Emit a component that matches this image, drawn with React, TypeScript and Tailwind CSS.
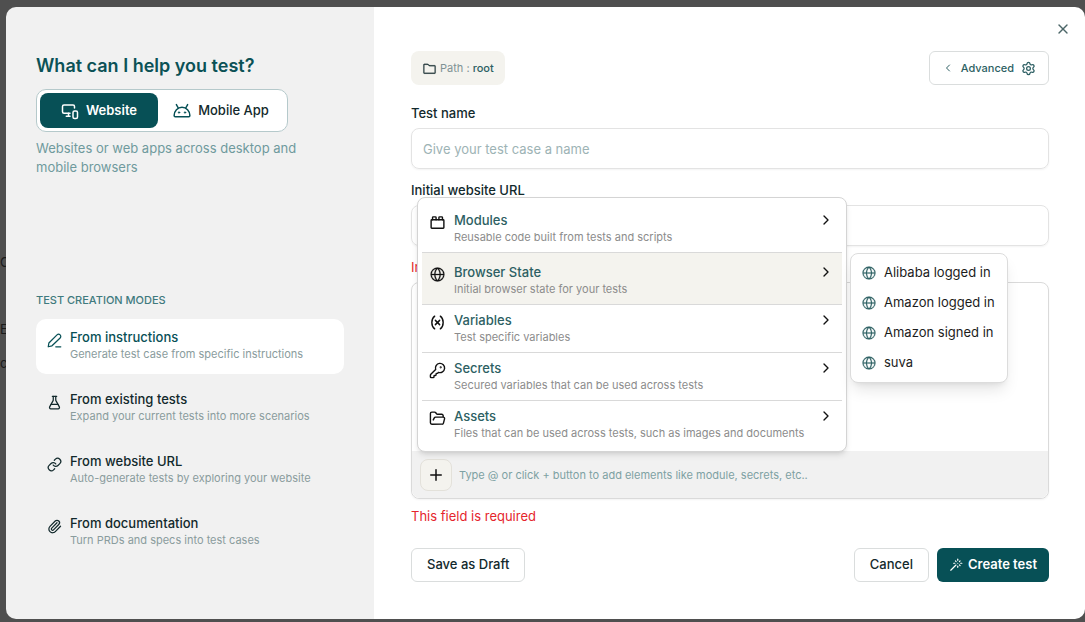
import React, { useState } from 'react';
import {
  ChevronLeft,
  ChevronRight,
  FlaskConical,
  FolderOpen,
  KeyRound,
  Link,
  MonitorSmartphone,
  Paperclip,
  Plus,
  Settings,
  ToyBrick,
  Variable,
  Wand,
  X,
} from 'lucide-react';
import { PiFolderSimple, PiGlobeSimple } from 'react-icons/pi';

const PencilUnderline = () => (
  <svg width="15" height="15" viewBox="0 0 24 24" fill="none" stroke="currentColor" strokeWidth="2" strokeLinecap="round" strokeLinejoin="round">
    <path d="M2 22l1-6L16 3a3.400 3.400 0 0 1 5 5L8 20.500z" />
    <path d="M14 22h8" />
  </svg>
);

const AndroidHead = () => (
  <svg width="18" height="18" viewBox="0 0 24 24" fill="none" stroke="currentColor" strokeWidth="2" strokeLinecap="round" strokeLinejoin="round">
    <path d="M1.500 18a10.500 11 0 0 1 21 0 1.500 1.500 0 0 1-1.500 1.500H3a1.500 1.500 0 0 1-1.500-1.500z" />
    <path d="M4.500 3.500 7 8M19.500 3.500 17 8" />
    <circle cx="8" cy="14" r="1" fill="currentColor" strokeWidth="1" />
    <circle cx="16" cy="14" r="1" fill="currentColor" strokeWidth="1" />
  </svg>
);

const modes = [
  {
    id: 'instructions',
    title: 'From instructions',
    description: 'Generate test case from specific instructions',
    icon: <PencilUnderline />,
  },
  {
    id: 'existing',
    title: 'From existing tests',
    description: 'Expand your current tests into more scenarios',
    icon: <FlaskConical size={15} />,
  },
  {
    id: 'url',
    title: 'From website URL',
    description: 'Auto-generate tests by exploring your website',
    icon: <Link size={15} />,
  },
  {
    id: 'documentation',
    title: 'From documentation',
    description: 'Turn PRDs and specs into test cases',
    icon: <Paperclip size={15} />,
  },
];

const menuItems = [
  {
    id: 'modules',
    title: 'Modules',
    description: 'Reusable code built from tests and scripts',
    icon: <ToyBrick size={17} />,
    className: 'border-b pt-[10px]',
  },
  {
    id: 'browser-state',
    title: 'Browser State',
    description: 'Initial browser state for your tests',
    icon: <PiGlobeSimple size={17} strokeWidth={4} />,
    className: 'border-b bg-[#f4f3ee] pt-[10px]',
  },
  {
    id: 'variables',
    title: 'Variables',
    description: 'Test specific variables',
    icon: <Variable size={17} />,
    className: 'border-b pt-[6px]',
  },
  {
    id: 'secrets',
    title: 'Secrets',
    description: 'Secured variables that can be used across tests',
    icon: <KeyRound size={17} />,
    className: 'border-b pt-[6px]',
  },
  {
    id: 'assets',
    title: 'Assets',
    description: 'Files that can be used across tests, such as images and documents',
    icon: <FolderOpen size={17} />,
    className: 'pt-[6px]',
  },
];

const browserStates = ['Alibaba logged in', 'Amazon logged in', 'Amazon signed in', 'suva'];

const Sidebar = () => {
  const [mode, setMode] = useState('instructions');

  return (
    <aside className="flex w-[368px] shrink-0 flex-col justify-between bg-[#f1f1f1] pt-[47px] pr-[30px] pb-[59px] pl-[30px]">
      <div>
        <h1 className="text-[18px] leading-6 font-semibold text-[#0b5156]">What can I help you test?</h1>

        <div className="mt-[11px] flex w-[252px] rounded-[10px] border border-[#b5c9cb] bg-white p-[3px]">
          <button
            type="button"
            aria-pressed="true"
            className="flex h-[35px] w-[118px] items-center justify-center gap-[7px] rounded-lg bg-[#075056] text-[13px] font-semibold text-white"
          >
            <MonitorSmartphone size={18} />
            Website
          </button>
          <button
            type="button"
            aria-pressed="false"
            className="flex h-[35px] flex-1 items-center justify-center gap-[7px] text-[13px] font-medium text-[#12292c]"
          >
            <span className="text-[#075056]">
              <AndroidHead />
            </span>
            Mobile App
          </button>
        </div>
        <p className="mt-[7px] max-w-[280px] text-[13px] leading-[19px] text-[#6f9a9d]">
          Websites or web apps across desktop and mobile browsers
        </p>
      </div>

      {/* creation modes */}
      <nav>
        <h2 className="mb-[11px] text-[11px] leading-4 font-medium text-[#3f7a7e]">TEST CREATION MODES</h2>
        <div className="flex flex-col gap-[7px]">
          {modes.map((item) => (
            <button
              key={item.id}
              type="button"
              onClick={() => setMode(item.id)}
              className={`flex h-[55px] items-start gap-2 rounded-[10px] px-[11px] pt-[9px] text-left ${
                mode === item.id ? 'bg-white text-[#075056]' : 'text-[#12292c]'
              }`}
            >
              <span className="mt-[5px]">{item.icon}</span>
              <span>
                <span className="block text-[13px] leading-[18px] font-medium">{item.title}</span>
                <span className="block text-[11px] leading-4 text-[#8a9c9d]">{item.description}</span>
              </span>
            </button>
          ))}
        </div>
      </nav>
    </aside>
  );
};

const BrowserStateMenu = () => (
  <ul
    role="menu"
    aria-label="Browser State"
    className="absolute top-0 left-full z-20 ml-2 w-[158px] rounded-lg border border-[#dcdcdc] bg-white p-1 shadow-lg"
  >
    {browserStates.map((name) => (
      <li key={name} role="none">
        <button
          type="button"
          role="menuitem"
          className="flex h-[30px] w-full items-center gap-[7px] px-[6px] text-[13px] whitespace-nowrap text-[#1c1c1c]"
        >
          <PiGlobeSimple size={16} className="shrink-0 text-[#2d5f63]" strokeWidth={3} />
          {name}
        </button>
      </li>
    ))}
  </ul>
);

const ElementMenu = () => (
  <ul
    role="menu"
    aria-label="Add element"
    className="absolute bottom-full left-[5px] z-10 -mb-px w-[430px] rounded-lg border border-[#d4d4d4] bg-white px-1 py-[3px] shadow-md"
  >
    {menuItems.map((item) => (
      <li key={item.id} role="none" className="relative">
        <button
          type="button"
          role="menuitem"
          className={`flex w-full items-start gap-2 border-[#d9d9d9] pr-2 pb-[7px] pl-[7px] text-left ${item.className}`}
        >
          <span className="mt-[3px] text-[#111111]">{item.icon}</span>
          <span className="flex-1">
            <span className="block text-[13px] leading-[18px] font-medium text-[#2d5f63]">{item.title}</span>
            <span className="block text-[11px] leading-4 text-[#8c8c8c]">{item.description}</span>
          </span>
          <ChevronRight size={16} className="mt-px text-[#111111]" />
        </button>
        {item.id === 'browser-state' && <BrowserStateMenu />}
      </li>
    ))}
  </ul>
);

const TestForm = () => {
  return (
    <form className="relative flex-1 bg-white pt-11 pr-9 pl-[37px]" onSubmit={(e) => e.preventDefault()}>
      <button type="button" aria-label="Close" className="absolute top-[14px] right-[14px] text-[#4c6668]">
        <X size={16} strokeWidth={2} />
      </button>

      <div className="flex items-center justify-between">
        <div className="flex h-[34px] items-center gap-[3px] rounded-lg bg-[#f4f3ee] px-[11px] text-[11px] leading-4 text-[#7f9294]">
          <PiFolderSimple size={15} className="text-[#12292c]" strokeWidth={3} />
          <span>
            Path : <span className="font-medium text-[#2d5f63]">root</span>
          </span>
        </div>
        <button
          type="button"
          className="flex h-[34px] items-center gap-[7px] rounded-md border border-[#dadddd] px-3 text-[11px] leading-4 font-medium text-[#2d5f63]"
        >
          <ChevronLeft size={12} />
          Advanced
          <Settings size={15} />
        </button>
      </div>

      <label htmlFor="test-name" className="mt-[18px] block text-[13px] leading-5 font-medium text-[#12292c]">
        Test name
      </label>
      <input
        id="test-name"
        type="text"
        placeholder="Give your test case a name"
        className="mt-[5px] block h-[41px] w-full rounded-lg border border-[#e3e3e3] px-[11px] text-[13px] shadow-xs placeholder:text-[#9db3b5]"
      />

      <label htmlFor="website-url" className="mt-[11px] block text-[13px] leading-5 font-medium text-[#12292c]">
        Initial website URL
      </label>
      <input
        id="website-url"
        type="url"
        className="mt-[5px] block h-[41px] w-full rounded-lg border border-[#e3e3e3] px-[11px] text-[13px] shadow-xs"
      />
      <p className="mt-[11px] text-[13px] leading-5 text-[#e5252c]">Invalid URL</p>

      {/* instruction editor with its toolbar */}
      <div className="mt-[5px] rounded-lg border border-[#dadada] shadow-xs">
        <textarea aria-label="Instructions" className="block h-[168px] w-full resize-none rounded-t-lg p-3 text-[13px] outline-none" />
        <div className="relative flex h-[47px] items-center gap-[7px] rounded-b-lg bg-[#f1f1f1] px-2">
          <ElementMenu />
          <button
            type="button"
            aria-label="Add element"
            className="flex size-8 items-center justify-center rounded-lg border border-[#e3e1da] bg-[#f4f3ee] text-[#111111]"
          >
            <Plus size={18} />
          </button>
          <span className="text-[11px] leading-4 text-[#7ea1a3]">
            Type @ or click + button to add elements like module, secrets, etc..
          </span>
        </div>
      </div>
      <p className="mt-[7px] text-[13px] leading-5 text-[#e5252c]">This field is required</p>

      <div className="mt-[22px] flex gap-2 text-[13px] font-medium text-[#12292c]">
        <button type="button" className="h-[34px] rounded-md border border-[#dadddd] px-[15px]">
          Save as Draft
        </button>
        <button type="button" className="ml-auto h-[34px] rounded-md border border-[#dadddd] px-[15px]">
          Cancel
        </button>
        <button
          type="submit"
          className="flex h-[34px] items-center gap-[5px] rounded-md bg-[#075056] px-3 font-semibold text-white"
        >
          <Wand size={14} strokeWidth={2} />
          Create test
        </button>
      </div>
    </form>
  );
};

const App = () => {
  return (
    <div className="relative flex min-h-screen bg-[#4f4f4f] pt-[7px] pb-[3px] pl-[6px] font-['Inter',sans-serif]">
      {/* page under the overlay */}
      <div className="absolute top-[254px] left-0 w-[6px] overflow-hidden text-[13px] leading-4 text-[#1a1a1a]" aria-hidden="true">
        <div>C</div>
        <div className="mt-[51px]">E</div>
        <div className="mt-[18px]">c</div>
      </div>

      <main className="relative flex flex-1 overflow-hidden rounded-[10px]">
        <Sidebar />
        <TestForm />
      </main>
    </div>
  );
};

export default App;
